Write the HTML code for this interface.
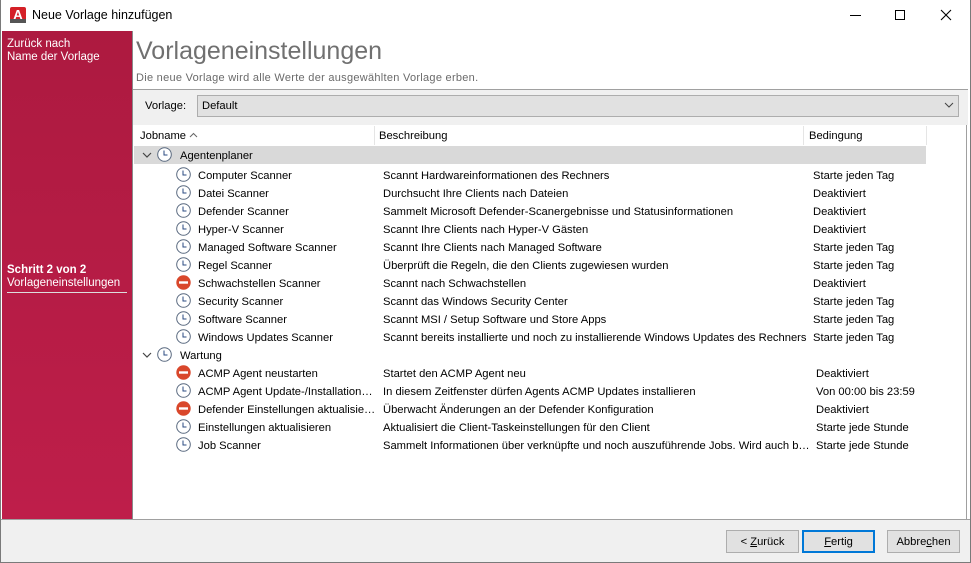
<!DOCTYPE html>
<html><head><meta charset="utf-8"><style>
*{margin:0;padding:0;box-sizing:border-box}
body{width:971px;height:563px;position:relative;background:#fff;font-family:"Liberation Sans",sans-serif;font-size:11.5px;color:#000;overflow:hidden}
.a{position:absolute;white-space:nowrap}
.side{position:absolute;left:2px;top:31px;width:130px;height:489px;background:linear-gradient(#ad1a40,#be1e4a)}
.ico{position:absolute;width:15px;height:15px}
.t{position:absolute;white-space:nowrap;line-height:14px;font-size:11.2px}
</style></head><body>
<div class="a" style="left:0;top:0;width:971px;height:563px;border:1px solid #7a7a7a;border-top:none"></div>
<svg class="a" style="left:10px;top:7px" width="16" height="16"><rect x="0" y="0" width="16" height="16" rx="2" fill="#d42027"/><rect x="0" y="12" width="16" height="4" fill="#555"/><text x="8" y="12" font-family="Liberation Sans" font-weight="bold" font-size="13" fill="#fff" text-anchor="middle">A</text></svg>
<div class="a" style="left:32px;top:8px;font-size:12.5px">Neue Vorlage hinzufügen</div>
<div class="a" style="left:850px;top:15px;width:11px;height:1px;background:#000"></div>
<div class="a" style="left:895px;top:10px;width:10px;height:10px;border:1px solid #000"></div>
<svg class="a" style="left:940px;top:9px" width="12" height="12"><path d="M1 1L11 11M11 1L1 11" stroke="#000" stroke-width="1.1"/></svg>
<div class="side"></div>
<div class="a" style="left:132px;top:31px;width:1px;height:489px;background:#8a8a8a"></div>
<div class="t" style="left:7px;top:37px;color:#fff;font-size:11.5px">Zurück nach</div>
<div class="t" style="left:7px;top:50px;color:#fff;font-size:11.5px">Name der Vorlage</div>
<div class="t" style="left:7px;top:263px;color:#fff;font-weight:bold;font-size:11.5px">Schritt 2 von 2</div>
<div class="t" style="left:7px;top:276px;color:#fff;font-size:11.5px">Vorlageneinstellungen</div>
<div class="a" style="left:7px;top:292px;width:120px;height:1px;background:#ddd"></div>
<div class="a" style="left:136px;top:37px;font-size:25px;color:#707070">Vorlageneinstellungen</div>
<div class="a" style="left:136px;top:72px;font-size:11px;color:#6a6a6a;letter-spacing:0.28px">Die neue Vorlage wird alle Werte der ausgewählten Vorlage erben.</div>
<div class="a" style="left:133px;top:89px;width:835px;height:1px;background:#a0a0a0"></div>
<div class="a" style="left:133px;top:90px;width:835px;height:35px;background:#f0f0f0"></div>
<div class="a" style="left:145px;top:100px;font-size:11.2px">Vorlage:</div>
<div class="a" style="left:197px;top:95px;width:762px;height:22px;background:#e1e1e1;border:1px solid #adadad"></div>
<div class="a" style="left:202px;top:100px;font-size:11.2px">Default</div>
<svg class="a" style="left:944px;top:102px" width="10" height="7"><path d="M1 1L5 5L9 1" stroke="#444" fill="none"/></svg>
<div class="a" style="left:133px;top:125px;width:834px;height:394px;background:#fff;border-right:1px solid #a0a0a0"></div>
<div class="a" style="left:374px;top:126px;width:1px;height:19px;background:#e5e5e5"></div>
<div class="a" style="left:803px;top:126px;width:1px;height:19px;background:#e5e5e5"></div>
<div class="a" style="left:926px;top:126px;width:1px;height:19px;background:#e5e5e5"></div>
<div class="t" style="left:140px;top:129px">Jobname</div>
<svg class="a" style="left:189px;top:132px" width="9" height="6"><path d="M1 5L4.5 1.5L8 5" stroke="#666" fill="none"/></svg>
<div class="t" style="left:379px;top:129px">Beschreibung</div>
<div class="t" style="left:809px;top:129px">Bedingung</div>
<div id="rows"></div>
<div class="a" style="left:1px;top:519px;width:969px;height:1px;background:#a0a0a0"></div>
<div class="a" style="left:1px;top:520px;width:969px;height:42px;background:#f0f0f0"></div>
<div class="a" style="left:726px;top:530px;width:73px;height:23px;background:#e1e1e1;border:1px solid #adadad;text-align:center;line-height:22px;font-size:11.2px"> &lt; <u>Z</u>urück</div>
<div class="a" style="left:802px;top:530px;width:73px;height:23px;background:#e1e1e1;border:2px solid #0078d7;text-align:center;line-height:20px;font-size:11.2px"><u>F</u>ertig</div>
<div class="a" style="left:887px;top:530px;width:73px;height:23px;background:#e1e1e1;border:1px solid #adadad;text-align:center;line-height:22px;font-size:11.2px">Abbre<u>c</u>hen</div>
<script>
const clock='<svg class="ico" viewBox="0 0 15 15"><circle cx="7.5" cy="7.5" r="6.8" fill="#fff" stroke="#5a6a80" stroke-width="1"/><path d="M7 3.5V8H10.5" stroke="#2a4a80" fill="none" stroke-width="1"/></svg>';
const stop='<svg class="ico" viewBox="0 0 15 15"><circle cx="7.5" cy="7.5" r="7.2" fill="#d9472b"/><rect x="3" y="6.3" width="9" height="2.4" fill="#fff"/></svg>';
const g1=[["c","Computer Scanner","Scannt Hardwareinformationen des Rechners","Starte jeden Tag"],["c","Datei Scanner","Durchsucht Ihre Clients nach Dateien","Deaktiviert"],["c","Defender Scanner","Sammelt Microsoft Defender-Scanergebnisse und Statusinformationen","Deaktiviert"],["c","Hyper-V Scanner","Scannt Ihre Clients nach Hyper-V Gästen","Deaktiviert"],["c","Managed Software Scanner","Scannt Ihre Clients nach Managed Software","Starte jeden Tag"],["c","Regel Scanner","Überprüft die Regeln, die den Clients zugewiesen wurden","Starte jeden Tag"],["s","Schwachstellen Scanner","Scannt nach Schwachstellen","Deaktiviert"],["c","Security Scanner","Scannt das Windows Security Center","Starte jeden Tag"],["c","Software Scanner","Scannt MSI / Setup Software und Store Apps","Starte jeden Tag"],["c","Windows Updates Scanner","Scannt bereits installierte und noch zu installierende Windows Updates des Rechners","Starte jeden Tag"]];
const g2=[["s","ACMP Agent neustarten","Startet den ACMP Agent neu","Deaktiviert"],["c","ACMP Agent Update-/Installation…","In diesem Zeitfenster dürfen Agents ACMP Updates installieren","Von 00:00 bis 23:59"],["s","Defender Einstellungen aktualisie…","Überwacht Änderungen an der Defender Konfiguration","Deaktiviert"],["c","Einstellungen aktualisieren","Aktualisiert die Client-Taskeinstellungen für den Client","Starte jede Stunde"],["c","Job Scanner","Sammelt Informationen über verknüpfte und noch auszuführende Jobs. Wird auch b…","Starte jede Stunde"]];
let h='';
function grp(y,name,bg){h+=(bg?'<div class="a" style="left:134px;top:'+(y-9)+'px;width:792px;height:18px;background:#d9d9d9"></div>':'')+'<svg class="a" style="left:142px;top:'+(y-3)+'px" width="10" height="7"><path d="M1 1L5 5L9 1" stroke="#444" fill="none" stroke-width="1.2"/></svg><div class="a" style="left:157px;top:'+(y-8)+'px">'+clock+'</div><div class="t" style="left:180px;top:'+(y-6)+'px">'+name+'</div>';}
function rows(y,arr,bx){arr.forEach((r,i)=>{const yy=y+i*18;h+='<div class="a" style="left:176px;top:'+(yy-8)+'px">'+(r[0]=="c"?clock:stop)+'</div><div class="t" style="left:198px;top:'+(yy-6)+'px">'+r[1]+'</div><div class="t" style="left:383px;top:'+(yy-6)+'px">'+r[2]+'</div><div class="t" style="left:'+bx+'px;top:'+(yy-6)+'px">'+r[3]+'</div>';});}
grp(155,"Agentenplaner",true);rows(175,g1,813);grp(355,"Wartung",false);rows(373,g2,816);
document.getElementById('rows').outerHTML=h;
</script>
</body></html>
